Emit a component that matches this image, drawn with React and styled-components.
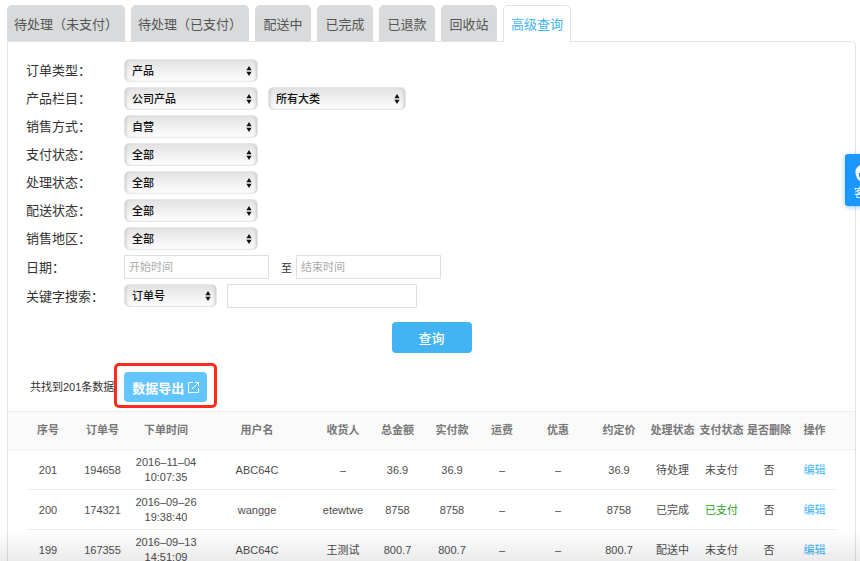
import React, { useState } from 'react';
import styled, { createGlobalStyle } from 'styled-components';

const GlobalStyle = createGlobalStyle`
  * {
    box-sizing: border-box;
  }
  body {
    margin: 0;
    background: #fff;
    color: #333;
    font-family: "Liberation Sans", "Noto Sans CJK SC", sans-serif;
    font-size: 13px;
  }
  button, input, select {
    font-family: inherit;
    margin: 0;
  }
`;

const Page = styled.div`
  height: 100vh;
  overflow-y: auto;
  scrollbar-width: none;
  padding: 5px 4px 0 7px;
`;

const TabBar = styled.nav`
  display: flex;
  gap: 6px;
`;

const Tab = styled.button`
  height: ${({ $active }) => ($active ? '37px' : '36px')};
  min-width: 56px;
  margin-bottom: ${({ $active }) => ($active ? '-1px' : '0')};
  padding: ${({ $active }) => ($active ? '0 7px 2px' : '0 6px')};
  border: 1px solid ${({ $active }) => ($active ? '#e2e3e4' : '#d8dadb')};
  border-bottom: 0;
  border-radius: 5px 5px 0 0;
  background: ${({ $active }) => ($active ? '#fff' : '#d8dadb')};
  color: ${({ $active }) => ($active ? '#42b3f3' : '#555')};
  font-size: 13px;
  white-space: nowrap;
  cursor: pointer;
  position: relative;
`;

const Panel = styled.main`
  border: 1px solid #e2e3e4;
  border-bottom: 0;
  border-radius: 0 5px 0 0;
  padding-top: 17px;
`;

const SearchForm = styled.form`
  display: flex;
  flex-direction: column;
  gap: 5px;
  padding: 0 18px;
`;

const Row = styled.div`
  display: flex;
  align-items: center;
`;

const Label = styled.label`
  width: 98px;
  flex: none;
  line-height: 23px;
`;

const Controls = styled.div`
  display: flex;
  gap: 10px;
`;

const DateRange = styled.div`
  display: flex;
  align-items: center;
  gap: 4px;
  font-size: 11px;
`;

const RangeWord = styled.span`
  padding-left: 8px;
`;

const SelectWrap = styled.div`
  position: relative;
  width: ${({ $width }) => $width}px;
`;

const SelectBox = styled.select`
  appearance: none;
  display: block;
  width: 100%;
  height: 23px;
  padding: 0 20px 0 7px;
  border: 1px solid #e6e6e6;
  border-radius: 5px;
  background: linear-gradient(#e2e2e2, #fdfdfd);
  box-shadow: inset 3px 0 3px -2px #c8c8c8, inset -3px 0 3px -2px #c8c8c8;
  color: #111;
  font-size: 11px;
  font-weight: 500;
`;

const SelectArrows = styled.svg`
  position: absolute;
  top: 7px;
  right: 6px;
  width: 6px;
  height: 10px;
  pointer-events: none;
`;

const TextInput = styled.input`
  width: ${({ $width }) => $width}px;
  height: 24px;
  padding: 0 4px;
  border: 1px solid #dfdfdf;
  background: #fff;
  font-size: 11px;

  &::placeholder {
    color: #aaa;
  }
`;

const SearchButton = styled.button`
  align-self: center;
  width: 80px;
  height: 31px;
  margin-top: 9px;
  border: 0;
  border-radius: 4px;
  background: #42b3f3;
  color: #fff;
  font-size: 13px;
  font-weight: 500;
  cursor: pointer;
`;

const ResultBar = styled.div`
  display: flex;
  align-items: center;
  padding: 10px 22px 3px;
  font-size: 11px;
  white-space: nowrap;
`;

const ExportFrame = styled.div`
  padding: 6px 7px 3px;
  border: 3px solid #fb2c1d;
  border-radius: 5px;
`;

const ExportButton = styled.button`
  display: flex;
  align-items: center;
  justify-content: center;
  gap: 4px;
  width: 83px;
  height: 30px;
  padding: 0;
  border: 0;
  border-radius: 4px;
  background: #63c5ff;
  color: #fff;
  font-size: 13px;
  font-weight: 700;
  cursor: pointer;
`;

const Table = styled.table`
  width: 100%;
  table-layout: fixed;
  border-collapse: separate;
  border-spacing: 0;
  color: #4c4c4c;
  font-size: 11px;
  line-height: 15px;
  text-align: center;

  th:first-child, td:first-child {
    padding-left: 18px;
  }
  th:last-child, td:last-child {
    padding-right: 18px;
  }
`;

const HeadCell = styled.th`
  height: 39px;
  padding: 0;
  border: solid #f0f0f0;
  border-width: 1px 0;
  background: #fafafa;
  color: #777;
  font-weight: 700;
  white-space: nowrap;
`;

// the rule under a row stops 18px short of the panel on both sides
const BodyRow = styled.tr`
  background: linear-gradient(#ededed, #ededed) center bottom / calc(100% - 36px) 1px no-repeat;
`;

const Cell = styled.td`
  height: 40px;
  padding: 5px 0;
  color: ${({ $paid }) => ($paid ? '#1fa01f' : 'inherit')};
`;

const EditLink = styled.a`
  color: #42b3f3;
  text-decoration: none;
`;

const BottomShade = styled.div`
  position: fixed;
  left: 0;
  right: 0;
  bottom: 0;
  height: 32px;
  background: linear-gradient(rgba(0, 0, 0, 0), rgba(0, 0, 0, 0.08));
  pointer-events: none;
`;

const ServiceButton = styled.button`
  position: fixed;
  top: 154px;
  right: -25px;
  display: flex;
  flex-direction: column;
  align-items: center;
  gap: 4px;
  width: 40px;
  height: 52px;
  padding: 10px 0 0;
  border: 0;
  border-radius: 3px;
  background: #1b98ff;
  box-shadow: 0 1px 5px rgba(27, 152, 255, 0.5);
  color: #fff;
  font-size: 11px;
  line-height: 14px;
  cursor: pointer;
`;

const tabs = ['待处理（未支付）', '待处理（已支付）', '配送中', '已完成', '已退款', '回收站', '高级查询'];

const filters = [
  { id: 'orderType', label: '订单类型', value: '产品' },
  { id: 'category', label: '产品栏目', value: '公司产品', extra: '所有大类' },
  { id: 'saleMode', label: '销售方式', value: '自营' },
  { id: 'payStatus', label: '支付状态', value: '全部' },
  { id: 'handleStatus', label: '处理状态', value: '全部' },
  { id: 'deliveryStatus', label: '配送状态', value: '全部' },
  { id: 'saleArea', label: '销售地区', value: '全部' },
];

const columns = [
  { title: '序号', width: 62 },
  { title: '订单号', width: 65 },
  { title: '下单时间', width: 62 },
  { title: '用户名', width: 120 },
  { title: '收货人', width: 52 },
  { title: '总金额', width: 57 },
  { title: '实付款', width: 52 },
  { title: '运费', width: 48 },
  { title: '优惠', width: 64 },
  { title: '约定价', width: 58 },
  { title: '处理状态', width: 49 },
  { title: '支付状态', width: 49 },
  { title: '是否删除', width: 46 },
  { title: '操作', width: 63 },
];

const orders = [
  { no: 201, id: '194658', date: '2016–11–04', time: '10:07:35', user: 'ABC64C', receiver: '–', total: '36.9', status: '待处理', paid: false },
  { no: 200, id: '174321', date: '2016–09–26', time: '19:38:40', user: 'wangge', receiver: 'etewtwe', total: '8758', status: '已完成', paid: true },
  { no: 199, id: '167355', date: '2016–09–13', time: '14:51:09', user: 'ABC64C', receiver: '王测试', total: '800.7', status: '配送中', paid: false },
];

const Select = ({ id, label, value, width = 134 }) => (
  <SelectWrap $width={width}>
    <SelectBox id={id} aria-label={label} defaultValue={value}>
      <option>{value}</option>
    </SelectBox>
    <SelectArrows viewBox="0 0 6 10" aria-hidden="true">
      <path d="M3 0 L5.6 4.2 H0.4 Z M3 10 L0.4 5.8 H5.6 Z" fill="#111" />
    </SelectArrows>
  </SelectWrap>
);

const OrderRow = ({ order }) => (
  <BodyRow>
    <Cell>{order.no}</Cell>
    <Cell>{order.id}</Cell>
    <Cell>{order.date}<br />{order.time}</Cell>
    <Cell>{order.user}</Cell>
    <Cell>{order.receiver}</Cell>
    <Cell>{order.total}</Cell>
    <Cell>{order.total}</Cell>
    <Cell>–</Cell>
    <Cell>–</Cell>
    <Cell>{order.total}</Cell>
    <Cell>{order.status}</Cell>
    <Cell $paid={order.paid}>{order.paid ? '已支付' : '未支付'}</Cell>
    <Cell>否</Cell>
    <Cell><EditLink href="#edit">编辑</EditLink></Cell>
  </BodyRow>
);

const App = () => {
  const [active, setActive] = useState('高级查询');

  return (
    <>
      <GlobalStyle />
      <Page>
        <TabBar>
          {tabs.map((tab) => (
            <Tab key={tab} type="button" $active={tab === active} onClick={() => setActive(tab)}>
              {tab}
            </Tab>
          ))}
        </TabBar>
        <Panel>
          <SearchForm onSubmit={(e) => e.preventDefault()}>
            {filters.map(({ id, label, value, extra }) => (
              <Row key={id}>
                <Label htmlFor={id}>{label}：</Label>
                <Controls>
                  <Select id={id} value={value} />
                  {extra && <Select id={`${id}Sub`} label={label} value={extra} width={138} />}
                </Controls>
              </Row>
            ))}
            <Row>
              <Label htmlFor="startDate">日期：</Label>
              <DateRange>
                <TextInput id="startDate" $width={145} placeholder="开始时间" />
                <RangeWord>至</RangeWord>
                <TextInput id="endDate" aria-label="结束时间" $width={145} placeholder="结束时间" />
              </DateRange>
            </Row>
            <Row>
              <Label htmlFor="keywordType">关键字搜索：</Label>
              <Controls>
                <Select id="keywordType" value="订单号" width={93} />
                <TextInput aria-label="关键字" $width={190} />
              </Controls>
            </Row>
            <SearchButton type="submit">查询</SearchButton>
          </SearchForm>
          <ResultBar>
            <span>共找到201条数据</span>
            <ExportFrame>
              <ExportButton type="button">
                数据导出
                <svg width="11" height="11" viewBox="0 0 11 11" fill="none" stroke="#fff" aria-hidden="true">
                  <path d="M5 0.5 H0.5 V10.5 H10.5 V6 M7 0.5 H10.5 V4 M10.5 0.5 L4 7" />
                </svg>
              </ExportButton>
            </ExportFrame>
          </ResultBar>
          <Table>
            <colgroup>
              {columns.map(({ title, width }) => <col key={title} width={width} />)}
            </colgroup>
            <thead>
              <tr>
                {columns.map(({ title }) => <HeadCell key={title}>{title}</HeadCell>)}
              </tr>
            </thead>
            <tbody>
              {orders.map((order) => <OrderRow key={order.no} order={order} />)}
            </tbody>
          </Table>
        </Panel>
      </Page>
      <BottomShade />
      <ServiceButton type="button">
        <svg width="20" height="18" viewBox="0 0 20 18" aria-hidden="true">
          <path
            d="M10 0 C4 0 0 4 0.5 9 C0.8 13 3 16 5.5 17.5 V15 C4 13 3.6 11 4 9 C7 8.5 9 7 10 5 C11 7 13 8.5 16 9 C16.4 11 16 13 14.5 15 V17.5 C17 16 19.2 13 19.5 9 C20 4 16 0 10 0 Z"
            fill="#fff"
          />
        </svg>
        客服
      </ServiceButton>
    </>
  );
};

export default App;
